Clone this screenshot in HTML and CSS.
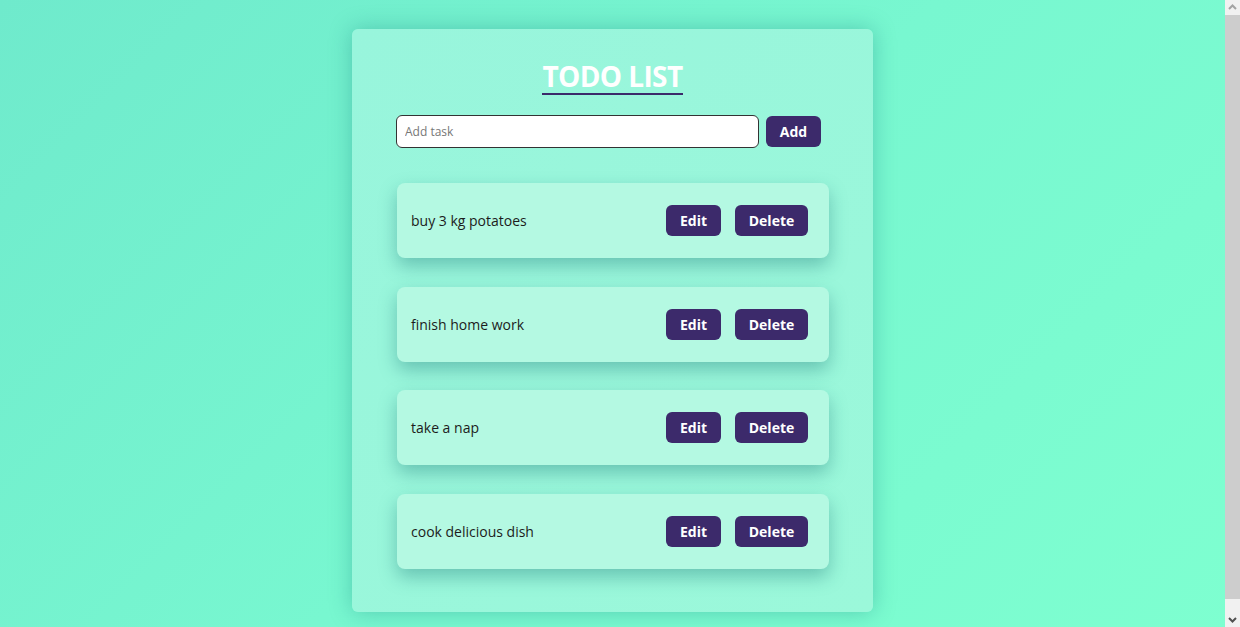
FILE: index.html
```html
<!DOCTYPE html>
<html>
<head>
<meta charset="utf-8">
<link rel="stylesheet" href="styles.css">
</head>
<body>
<div class="card">
  <div class="title-wrap"><h1 class="title">TODO LIST</h1></div>
  <form class="add-form">
    <input class="task-input" type="text" placeholder="Add task">
    <button class="btn btn-add" type="button">Add</button>
  </form>
  <ul class="list">
    <li class="item"><span class="item-text">buy 3 kg potatoes</span><div class="actions"><button class="btn btn-edit">Edit</button><button class="btn btn-del">Delete</button></div></li>
    <li class="item"><span class="item-text">finish home work</span><div class="actions"><button class="btn btn-edit">Edit</button><button class="btn btn-del">Delete</button></div></li>
    <li class="item"><span class="item-text">take a nap</span><div class="actions"><button class="btn btn-edit">Edit</button><button class="btn btn-del">Delete</button></div></li>
    <li class="item"><span class="item-text">cook delicious dish</span><div class="actions"><button class="btn btn-edit">Edit</button><button class="btn btn-del">Delete</button></div></li>
  </ul>
</div>
<div class="scrollbar">
  <div class="sb-arrow">
    <svg width="15" height="15" viewBox="0 0 15 15"><path d="M4 9 L7.5 5.5 L11 9" fill="none" stroke="#a3a3a3" stroke-width="2"/></svg>
  </div>
  <div class="sb-track"><div class="sb-thumb"></div></div>
  <div class="sb-arrow">
    <svg width="15" height="15" viewBox="0 0 15 15"><path d="M4 6 L7.5 9.5 L11 6" fill="none" stroke="#505050" stroke-width="2"/></svg>
  </div>
</div>
</body>
</html>
```
FILE: styles.css
```css
html, body {
  margin: 0;
  padding: 0;
}
body {
  min-height: 100vh;
  background: linear-gradient(135deg, #6feacc 0%, #78f7d0 50%, #7effd0 100%);
  font-family: "Open Sans", "Noto Sans", sans-serif;
  padding: 29px 15px 29px 0;
  box-sizing: border-box;
}
.card {
  width: 521px;
  height: 583px;
  margin: 0 auto;
  box-sizing: border-box;
  background: linear-gradient(135deg, #98f5dc 0%, #9bf8da 100%);
  border-radius: 6px;
  box-shadow: 0 0 22px rgba(40, 150, 140, 0.45);
  padding: 31px 44px 0 44px;
}
.title-wrap {
  text-align: center;
}
.title {
  display: inline-block;
  margin: 0;
  font-size: 28px;
  line-height: 33px;
  font-weight: 700;
  color: #ffffff;
  border-bottom: 2px solid #3b2a6a;
  letter-spacing: -0.6px;
}
.add-form {
  display: flex;
  align-items: center;
  gap: 7px;
  margin: 20px 0 0 0;
}
.task-input {
  width: 363px;
  height: 33px;
  box-sizing: border-box;
  border: 1px solid #333;
  border-radius: 6px;
  padding: 0 8px;
  font-family: inherit;
  font-size: 12px;
  background: #fff;
}
.task-input::placeholder {
  color: #777;
}
.btn {
  background: #3c2a6b;
  color: #fff;
  border: none;
  border-radius: 6px;
  height: 31px;
  padding: 0 13px;
  font-family: inherit;
  font-size: 14px;
  font-weight: 700;
  cursor: pointer;
}
.btn-add {
  width: 55px;
  padding: 0;
}
.list {
  list-style: none;
  margin: 35px 0 0 1px;
  padding: 0;
  display: flex;
  flex-direction: column;
  gap: 28.5px;
}
.item {
  width: 432px;
  height: 75px;
  box-sizing: border-box;
  background: #b4f9e2;
  border-radius: 8px;
  box-shadow: 0 8px 18px rgba(30, 120, 120, 0.4);
  display: flex;
  align-items: center;
  justify-content: space-between;
  padding: 0 21px 0 14px;
}
.item-text {
  font-size: 14px;
  color: #1c1c1c;
}
.actions {
  display: flex;
  gap: 14px;
}
.btn-edit {
  width: 55px;
  padding: 0;
}
.btn-del {
  width: 73px;
  padding: 0;
}
.scrollbar {
  position: fixed;
  top: 0;
  right: 0;
  width: 15px;
  height: 100vh;
  background: #f1f1f1;
  display: flex;
  flex-direction: column;
}
.sb-arrow {
  height: 15px;
  flex: none;
}
.sb-arrow svg {
  display: block;
}
.sb-track {
  flex: 1;
  display: flex;
  flex-direction: column;
}
.sb-thumb {
  flex: 1;
  margin-bottom: 13px;
  background: #cdcdcd;
}
```
